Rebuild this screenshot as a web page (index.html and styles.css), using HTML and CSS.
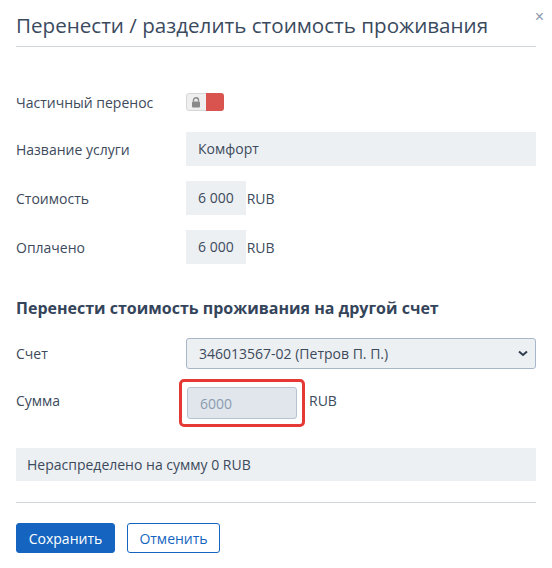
FILE: index.html
```html
<!DOCTYPE html>
<html lang="ru">
<head>
  <meta charset="UTF-8" />
  <meta name="viewport" content="width=device-width, initial-scale=1" />
  <title>Перенести / разделить стоимость проживания</title>
  <link rel="stylesheet" href="styles.css">
</head>
<body>

<div class="modal">
  <div class="modal-header">
    <h2>Перенести / разделить стоимость проживания</h2>
    <button type="button" class="close" aria-label="Закрыть">&times;</button>
  </div>

  <form class="modal-body" autocomplete="off">
    <div class="row row-toggle">
      <label class="lbl">Частичный перенос</label>
      <span class="toggle">
        <span class="toggle-lock">
          <svg width="10" height="11" viewBox="0 0 10 11">
            <path d="M2.5 4.5V3.2a2.5 2.5 0 0 1 5 0v1.3" fill="none" stroke="#8a8a8a" stroke-width="1.4"/>
            <rect x="1" y="4.5" width="8" height="6" rx="1" fill="#8a8a8a"/>
          </svg>
        </span>
        <span class="toggle-on"></span>
      </span>
    </div>

    <div class="row">
      <label class="lbl">Название услуги</label>
      <div class="field wide">Комфорт</div>
    </div>

    <div class="row">
      <label class="lbl">Стоимость</label>
      <div class="field">6 000</div>
      <span class="unit">RUB</span>
    </div>

    <div class="row">
      <label class="lbl">Оплачено</label>
      <div class="field">6 000</div>
      <span class="unit">RUB</span>
    </div>

    <h3>Перенести стоимость проживания на другой счет</h3>

    <div class="row row-select">
      <label class="lbl">Счет</label>
      <div class="select-wrap">
        <select>
          <option>346013567-02 (Петров П. П.)</option>
        </select>
        <svg class="chevron" width="10" height="7" viewBox="0 0 10 7">
          <path d="M1 1.5l4 3.5 4-3.5" fill="none" stroke="#2f3d4e" stroke-width="2"/>
        </svg>
      </div>
    </div>

    <div class="row row-sum">
      <label class="lbl lbl-sum">Сумма</label>
      <div class="highlight">
        <input type="text" value="6000" disabled />
      </div>
      <span class="unit unit-sum">RUB</span>
    </div>

    <div class="note">Нераспределено на сумму 0 RUB</div>

    <div class="modal-footer">
      <button type="button" class="btn primary">Сохранить</button>
      <button type="button" class="btn outline">Отменить</button>
    </div>
  </form>
</div>

</body>
</html>
```

FILE: styles.css
```css
body {
  margin: 0;
  font-family: 'Open Sans', 'Noto Sans', sans-serif;
  font-size: 14px;
  color: #3c4a5b;
  background: #fff;
}
.modal {
  width: 520px;
  padding: 0 16px;
}
.modal-header {
  position: relative;
  padding: 10px 0 6px;
  border-bottom: 1px solid #cfd6de;
}
.modal-header h2 {
  margin: 0;
  font-size: 20.6px;
  font-weight: 400;
  line-height: 30px;
  color: #3a4a5e;
}
.close {
  position: absolute;
  top: 9px;
  right: -8px;
  border: none;
  background: none;
  padding: 0;
  font-size: 16px;
  line-height: 16px;
  color: #8c99ab;
  cursor: pointer;
}
.modal-body {
  padding-top: 38px;
}
.row {
  display: flex;
  align-items: center;
  min-height: 34px;
  margin-bottom: 15px;
}
.row-toggle {
  margin-bottom: 13px;
}
.lbl {
  width: 170px;
  flex: 0 0 170px;
}
.toggle {
  display: flex;
  width: 38px;
  height: 18px;
  border-radius: 3px;
  overflow: hidden;
}
.toggle-lock {
  flex: 1;
  display: flex;
  align-items: center;
  justify-content: center;
  background: #efefef;
  border: 1px solid #d6d6d6;
  border-right: none;
  border-radius: 3px 0 0 3px;
}
.toggle-on {
  flex: 1;
  background: #d9534f;
}
.field {
  height: 34px;
  line-height: 34px;
  padding: 0 12px;
  background: #edf0f3;
}
.field.wide {
  flex: 1;
}
.unit {
  margin-left: 1px;
}
h3 {
  margin: 33px 0 19px;
  font-size: 16px;
  font-weight: 700;
  line-height: 22px;
  color: #34445a;
}
.row-select {
  min-height: 31px;
  margin-bottom: 10px;
}
.select-wrap {
  position: relative;
  flex: 1;
}
.select-wrap select {
  width: 100%;
  height: 31px;
  padding: 0 12px;
  border: 1px solid #a7b6c9;
  border-radius: 3px;
  background: #edf0f3;
  font: inherit;
  color: #3c4a5b;
  appearance: none;
  -webkit-appearance: none;
}
.chevron {
  position: absolute;
  right: 8px;
  top: 12px;
  pointer-events: none;
}
.row-sum {
  margin-bottom: 21px;
}
.lbl-sum {
  margin-top: -6px;
}
.highlight {
  margin-left: -7px;
  padding: 5px;
  border: 3px solid #e53935;
  border-radius: 5px;
}
.highlight input {
  display: block;
  box-sizing: border-box;
  width: 110px;
  height: 32px;
  padding: 0 12px;
  border: 1px solid #b8c3d1;
  border-radius: 3px;
  background: #e1e6ed;
  font: inherit;
  color: #8b9bb0;
}
.unit-sum {
  margin-left: 4px;
  margin-top: -6px;
}
.note {
  height: 33px;
  line-height: 33px;
  padding: 0 11px;
  background: #edf0f3;
}
.modal-footer {
  margin-top: 21px;
  padding-top: 20px;
  border-top: 1px solid #cfd6de;
  display: flex;
  gap: 12px;
}
.btn {
  height: 30px;
  padding: 0;
  border-radius: 3px;
  font: inherit;
  cursor: pointer;
}
.btn.primary {
  width: 99px;
  background: #1565c0;
  border: 1px solid #1565c0;
  color: #fff;
}
.btn.outline {
  width: 93px;
  background: #fff;
  border: 1px solid #1565c0;
  color: #1565c0;
}
```
